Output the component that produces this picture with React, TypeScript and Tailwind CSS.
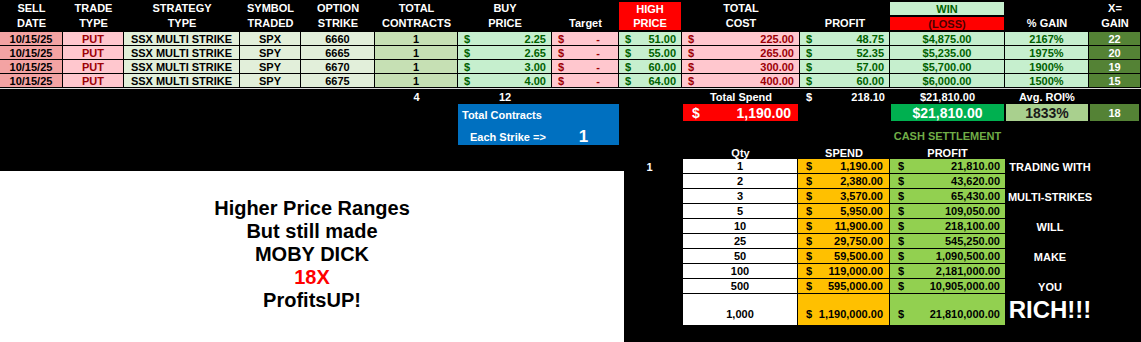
import React from "react";

const rows = [
  { sym: "SPX", strike: "6660", buy: "2.25", high: "51.00", cost: "225.00", profit: "48.75", win: "$4,875.00", gain: "2167%", x: "22" },
  { sym: "SPY", strike: "6665", buy: "2.65", high: "55.00", cost: "265.00", profit: "52.35", win: "$5,235.00", gain: "1975%", x: "20" },
  { sym: "SPY", strike: "6670", buy: "3.00", high: "60.00", cost: "300.00", profit: "57.00", win: "$5,700.00", gain: "1900%", x: "19" },
  { sym: "SPY", strike: "6675", buy: "4.00", high: "64.00", cost: "400.00", profit: "60.00", win: "$6,000.00", gain: "1500%", x: "15" },
];

const settle = [
  { q: "1", s: "1,190.00", p: "21,810.00", note: "TRADING WITH", lead: "1" },
  { q: "2", s: "2,380.00", p: "43,620.00", note: "" },
  { q: "3", s: "3,570.00", p: "65,430.00", note: "MULTI-STRIKES" },
  { q: "5", s: "5,950.00", p: "109,050.00", note: "" },
  { q: "10", s: "11,900.00", p: "218,100.00", note: "WILL" },
  { q: "25", s: "29,750.00", p: "545,250.00", note: "" },
  { q: "50", s: "59,500.00", p: "1,090,500.00", note: "MAKE" },
  { q: "100", s: "119,000.00", p: "2,181,000.00", note: "" },
  { q: "500", s: "595,000.00", p: "10,905,000.00", note: "YOU" },
];

const cols =
  "grid grid-cols-[63px_61px_116px_61px_74px_83px_94px_67px_63px_118px_90px_115px_84px_52px]";

function Head({ a, b }: { a?: string; b: string }) {
  return (
    <div className="flex h-[32px] flex-col items-center justify-center leading-[15px] text-white">
      <span>{a ?? "\u00a0"}</span>
      <span>{b}</span>
    </div>
  );
}

function Money({ v, cls, pr = "pr-[5px]" }: { v: string; cls: string; pr?: string }) {
  return (
    <div className={`flex h-[14px] items-center justify-between border-r border-b border-black pl-[6px] ${pr} ${cls}`}>
      <span>$</span>
      <span>{v}</span>
    </div>
  );
}

function Cell({ children, cls }: { children: React.ReactNode; cls: string }) {
  return (
    <div className={`flex h-[14px] items-center justify-center border-r border-b border-black ${cls}`}>
      {children}
    </div>
  );
}

export default function App() {
  const green = "bg-[#c6efce] text-[#006100]";
  const pink = "bg-[#ffc7ce] text-[#9c0006]";
  const grey = "bg-[#e2efda] text-black";
  return (
    <div className="h-[342px] w-[1141px] overflow-hidden bg-black font-['Liberation_Sans',Arial,sans-serif] text-[11px] font-bold leading-[14px]">
      {/* header */}
      <div className={cols}>
        <Head a="SELL" b="DATE" />
        <Head a="TRADE" b="TYPE" />
        <Head a="STRATEGY" b="TYPE" />
        <Head a="SYMBOL" b="TRADED" />
        <Head a="OPTION" b="STRIKE" />
        <Head a="TOTAL" b="CONTRACTS" />
        <Head a="BUY" b="PRICE" />
        <Head b="Target" />
        <div className="my-[2px] mr-px flex h-[28px] flex-col items-center justify-center bg-[#ff0000] leading-[14px] text-white">
          <span>HIGH</span>
          <span>PRICE</span>
        </div>
        <Head a="TOTAL" b="COST" />
        <Head b="PROFIT" />
        <div className="flex h-[32px] flex-col gap-[2px] py-[2px] pr-px">
          <div className="flex h-[13px] items-center justify-center bg-[#c6efce] text-[#006100]">WIN</div>
          <div className="flex h-[13px] items-center justify-center bg-[#ff0000] text-[#4a0000]">(LOSS)</div>
        </div>
        <Head b="% GAIN" />
        <Head a="X=" b="GAIN" />
      </div>

      {/* data rows */}
      {rows.map((r) => (
        <div key={r.strike} className={cols}>
          <Cell cls="bg-[#f3a3a3] text-black">10/15/25</Cell>
          <Cell cls={pink}>PUT</Cell>
          <Cell cls={grey}>SSX MULTI STRIKE</Cell>
          <Cell cls={grey}>{r.sym}</Cell>
          <Cell cls={grey}>{r.strike}</Cell>
          <Cell cls="bg-[#c6e0b4] text-black">1</Cell>
          <Money v={r.buy} cls={green} />
          <Money v="-" cls={pink} pr="pr-[18px]" />
          <Money v={r.high} cls={green} />
          <Money v={r.cost} cls={pink} />
          <Money v={r.profit} cls={green} />
          <Cell cls={green}>{r.win}</Cell>
          <Cell cls={green}>{r.gain}</Cell>
          <Cell cls="bg-[#548235] text-white">{r.x}</Cell>
        </div>
      ))}

      {/* totals */}
      <div className={`${cols} h-[16px] items-center border-t border-[#d9d9d9] text-white`}>
        <span />
        <span />
        <span />
        <span />
        <span />
        <span className="text-center">4</span>
        <span className="text-center">12</span>
        <span />
        <span />
        <span className="text-center">Total Spend</span>
        <span className="flex justify-between pr-[5px] pl-[6px]">
          <span>$</span>
          <span>218.10</span>
        </span>
        <span className="text-center">$21,810.00</span>
        <span className="text-center">Avg. ROI%</span>
        <span />
      </div>

      {/* lower part */}
      <div className="flex">
        <div className="flex w-[624px] flex-col">
          <div className="ml-[458px] flex h-[41px] w-[161px] flex-col bg-[#0070c0] text-white">
            <span className="pt-[4px] pl-[4px]">Total Contracts</span>
            <div className="flex items-center pt-[6px] pl-[12px]">
              <span>Each Strike =&gt;</span>
              <span className="ml-[33px] text-[17px] leading-[18px]">1</span>
            </div>
          </div>
          <div className="mt-[26px] flex h-[171px] flex-col items-center justify-center bg-white pb-[4px] text-[20px] leading-[23px] text-black">
            <span>Higher Price Ranges</span>
            <span>But still made</span>
            <span>MOBY DICK</span>
            <span className="text-[#ff0000]">18X</span>
            <span>ProfitsUP!</span>
          </div>
        </div>

        <div className="flex w-[517px] flex-col">
          <div className="grid h-[17px] grid-cols-[59px_115px_92px_115px_84px_52px]">
            <span />
            <div className="flex items-center justify-between bg-[#ff0000] pr-[7px] pl-[9px] text-[14px] text-white">
              <span>$</span>
              <span>1,190.00</span>
            </div>
            <span />
            <div className="mx-px flex items-center justify-center bg-[#00b050] text-[14px] text-white">$21,810.00</div>
            <div className="mx-px flex items-center justify-center bg-[#a9d08e] text-[14px] text-[#1a1a1a]">1833%</div>
            <div className="mr-[2px] ml-px flex items-center justify-center bg-[#548235] text-white">18</div>
          </div>

          <div className="grid h-[25px] grid-cols-[59px_115px_92px_115px] items-end pb-[3px]">
            <span />
            <span />
            <span />
            <span className="text-center text-[#70ad47]">CASH SETTLEMENT</span>
          </div>

          <div className="grid h-[13px] grid-cols-[59px_115px_92px_115px] items-center text-white">
            <span />
            <span className="text-center">Qty</span>
            <span className="text-center">SPEND</span>
            <span className="text-center">PROFIT</span>
          </div>

          {settle.map((s) => (
            <div key={s.q} className="grid h-[15px] grid-cols-[59px_115px_92px_115px_90px]">
              <span className="flex items-center justify-center pr-[8px] text-white">{s.lead ?? ""}</span>
              <span className="flex items-center justify-center border-r border-b border-black bg-white text-black">{s.q}</span>
              <span className="flex items-center justify-between border-r border-b border-black bg-[#ffc000] pr-[6px] pl-[8px] text-black">
                <span>$</span>
                <span>{s.s}</span>
              </span>
              <span className="flex items-center justify-between border-b border-black bg-[#92d050] pr-[5px] pl-[8px] text-black">
                <span>$</span>
                <span>{s.p}</span>
              </span>
              <span className="flex items-center justify-center text-white">{s.note}</span>
            </div>
          ))}

          <div className="grid h-[31px] grid-cols-[59px_115px_92px_115px_90px]">
            <span />
            <span className="flex items-end justify-center border-r border-black bg-white pb-[4px] text-black">1,000</span>
            <span className="flex items-end justify-between border-r border-black bg-[#ffc000] pr-[6px] pb-[4px] pl-[8px] text-black">
              <span>$</span>
              <span>1,190,000.00</span>
            </span>
            <span className="flex items-end justify-between bg-[#92d050] pr-[5px] pb-[4px] pl-[8px] text-black">
              <span>$</span>
              <span>21,810,000.00</span>
            </span>
            <span className="flex items-center justify-center text-[24px] leading-[26px] text-white">RICH!!!</span>
          </div>
        </div>
      </div>
    </div>
  );
}
